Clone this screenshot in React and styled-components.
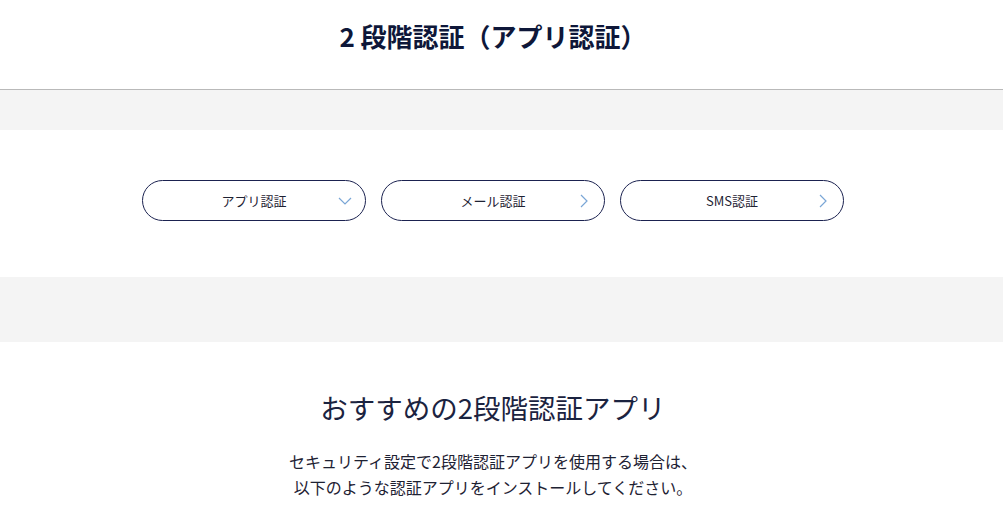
import styled, { createGlobalStyle } from "styled-components";

const GlobalStyle = createGlobalStyle`
  body {
    margin: 0;
    background: #fff;
    font-family: "Noto Sans CJK JP", "Noto Sans", sans-serif;
    color: #1b2340;
  }
`;

// the original page keeps room for a scrollbar, so centred content sits a bit left
const gutter = 17;

const Header = styled.header`
  height: 90px;
  border-bottom: 1px solid #b9b9b9;
  box-sizing: border-box;
  padding: 18px ${gutter}px 0 0;
  text-align: center;

  h1 {
    margin: 0;
    font-size: 26px;
    line-height: 36px;
    font-weight: 700;
    color: #0e1739;
  }
`;

const Band = styled.div`
  height: ${(p) => p.$h}px;
  background: #f4f4f4;
`;

const Tabs = styled.nav`
  display: flex;
  justify-content: center;
  gap: 15px;
  padding: 50px ${gutter}px 56px 0;
`;

const TabButton = styled.button`
  position: relative;
  width: 224px;
  height: 41px;
  border: 1px solid #1b2250;
  border-radius: 21px;
  background: #fff;
  font-family: inherit;
  font-size: 13px;
  color: #1e2233;
  cursor: pointer;

  svg {
    position: absolute;
    right: 12px;
    top: 50%;
    transform: translateY(-50%);
  }
`;

const Intro = styled.section`
  text-align: center;
  padding: 47px ${gutter}px 0 0;

  h2 {
    margin: 0;
    font-size: 27.5px;
    font-weight: 400;
    color: #1b2340;
    line-height: 36px;
  }

  p {
    margin: 23px 0 0;
    font-size: 16px;
    line-height: 26px;
    color: #1e2233;
  }
`;

const Chevron = ({ down }) => (
  <svg width="16" height="16" viewBox="0 0 16 16" fill="none">
    {down ? (
      <path d="M2 5l6 6 6-6" stroke="#7aa6d6" strokeWidth="1.2" />
    ) : (
      <path d="M5 2l6 6-6 6" stroke="#7aa6d6" strokeWidth="1.2" />
    )}
  </svg>
);

const tabs = [
  { label: "アプリ認証", down: true },
  { label: "メール認証" },
  { label: "SMS認証" },
];

export default function App() {
  return (
    <>
      <GlobalStyle />
      <Header>
        <h1>2 段階認証（アプリ認証）</h1>
      </Header>
      <Band $h={40} />
      <Tabs>
        {tabs.map((t) => (
          <TabButton key={t.label}>
            {t.label}
            <Chevron down={t.down} />
          </TabButton>
        ))}
      </Tabs>
      <Band $h={65} />
      <Intro>
        <h2>おすすめの2段階認証アプリ</h2>
        <p>
          セキュリティ設定で2段階認証アプリを使用する場合は、
          <br />
          以下のような認証アプリをインストールしてください。
        </p>
      </Intro>
    </>
  );
}
